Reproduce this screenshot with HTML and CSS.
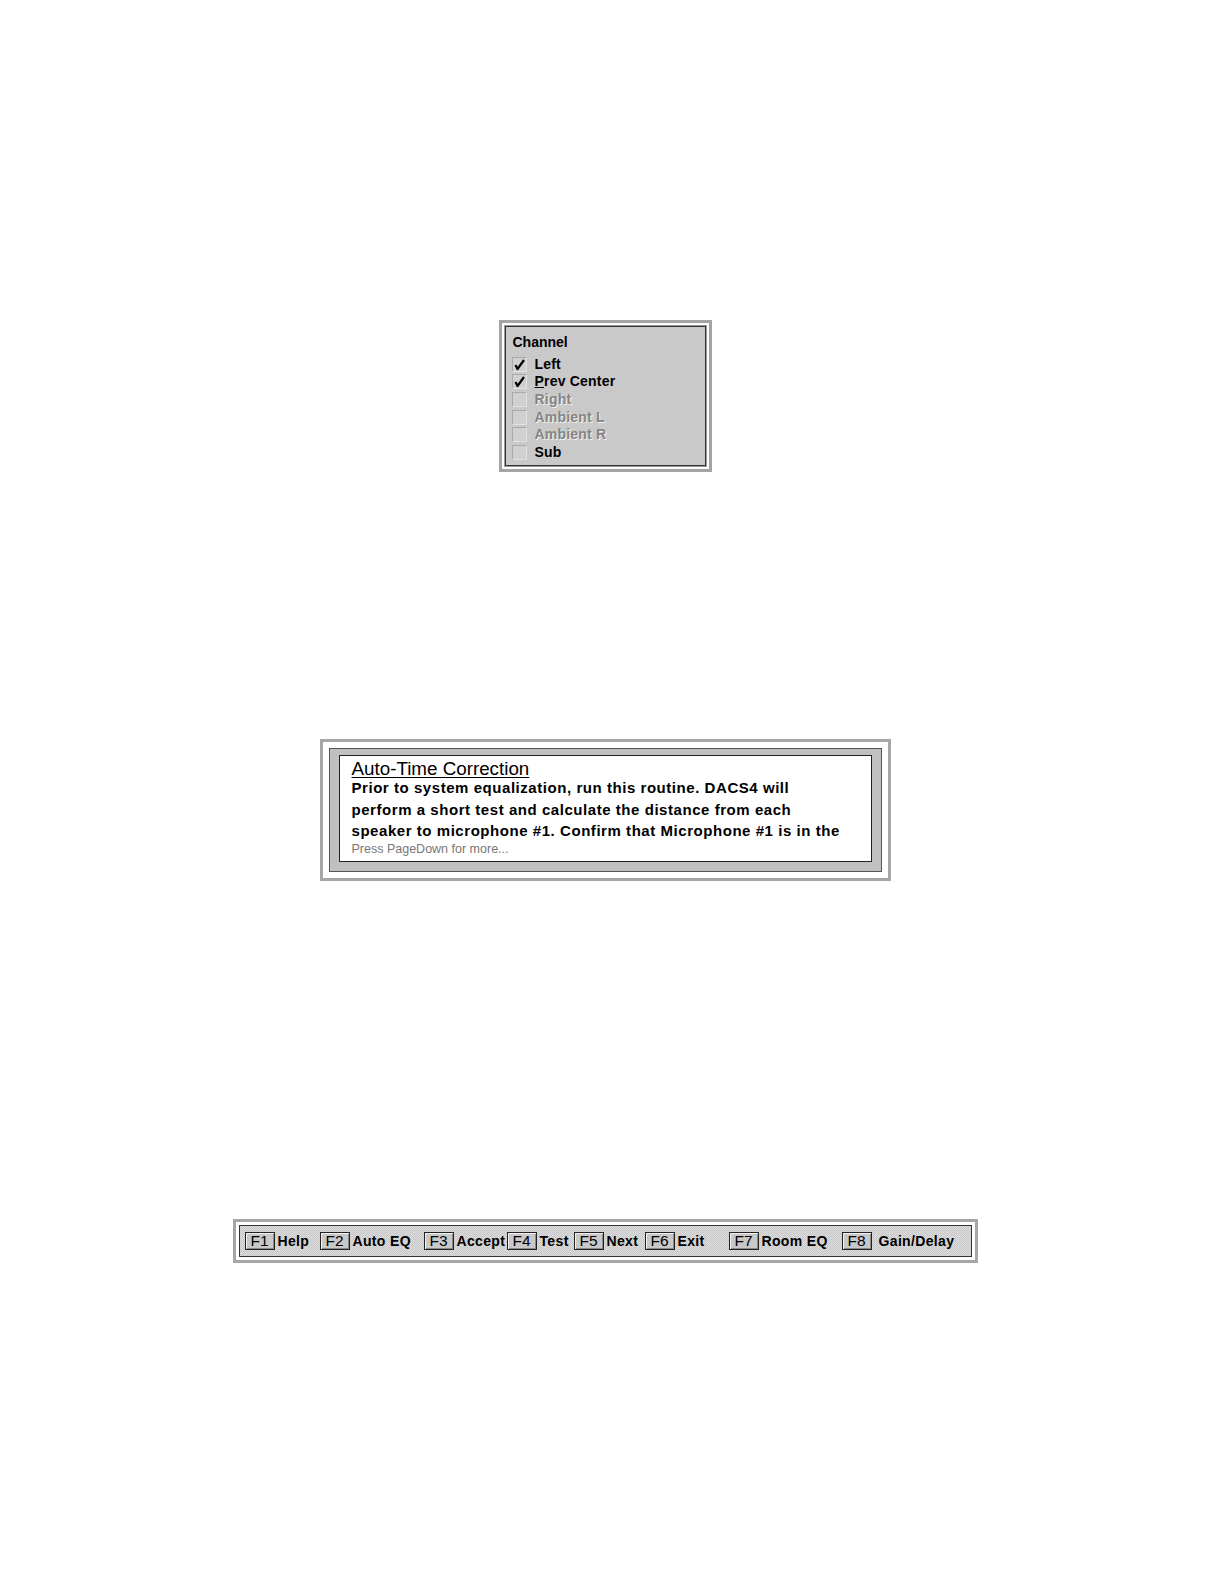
FILE: index.html
```html
<!DOCTYPE html>
<html>
<head>
<meta charset="utf-8">
<link rel="stylesheet" href="styles.css">
</head>
<body>
<div class="page">
  <div class="channel">
    <div class="channel-inner">
      <div class="channel-title">Channel</div>
      <div class="row"><span class="cb"><svg viewBox="0 0 15 15" width="15" height="15"><path d="M3.5 8 L5.5 12 L12 3" fill="none" stroke="#000" stroke-width="2.2" stroke-linejoin="round"/></svg></span><span class="lbl">Left</span></div>
      <div class="row"><span class="cb"><svg viewBox="0 0 15 15" width="15" height="15"><path d="M3.5 8 L5.5 12 L12 3" fill="none" stroke="#000" stroke-width="2.2" stroke-linejoin="round"/></svg></span><span class="lbl"><u>P</u>rev Center</span></div>
      <div class="row"><span class="cb"></span><span class="lbl off">Right</span></div>
      <div class="row"><span class="cb"></span><span class="lbl off">Ambient L</span></div>
      <div class="row"><span class="cb"></span><span class="lbl off">Ambient R</span></div>
      <div class="row"><span class="cb"></span><span class="lbl">Sub</span></div>
    </div>
  </div>

  <div class="info">
    <div class="info-mid">
      <div class="info-inner">
        <div class="info-title">Auto-Time Correction</div>
        <div class="info-body">Prior to system equalization, run this routine. DACS4 will<br>perform a short test and calculate the distance from each<br>speaker to microphone #1. Confirm that Microphone #1 is in the</div>
        <div class="info-more">Press PageDown for more...</div>
      </div>
    </div>
  </div>

  <div class="fkeys">
    <div class="fkeys-inner">
      <div class="fk"><span class="key">F1</span><span class="fl">Help</span></div>
      <div class="fk"><span class="key">F2</span><span class="fl">Auto EQ</span></div>
      <div class="fk"><span class="key">F3</span><span class="fl">Accept</span></div>
      <div class="fk"><span class="key">F4</span><span class="fl">Test</span></div>
      <div class="fk"><span class="key">F5</span><span class="fl">Next</span></div>
      <div class="fk"><span class="key">F6</span><span class="fl">Exit</span></div>
      <div class="fk"><span class="key">F7</span><span class="fl">Room EQ</span></div>
      <div class="fk"><span class="key">F8</span><span class="fl wide">Gain/Delay</span></div>
    </div>
  </div>
</div>
</body>
</html>
```

FILE: styles.css
```css
html, body {
  margin: 0;
  padding: 0;
  background: #fff;
}

body {
  font-family: "Liberation Sans", Arial, sans-serif;
  color: #000;
}

.page {
  width: 1210px;
  height: 1584px;
  display: flex;
  flex-direction: column;
  align-items: center;
  padding-top: 320px;
  box-sizing: border-box;
}

/* Channel box */
.channel {
  width: 213px;
  height: 152px;
  box-sizing: border-box;
  border: 3px solid #a4a4a4;
  padding: 3px;
  background: #fff;
}

.channel-inner {
  height: 100%;
  box-sizing: border-box;
  border: 1px solid #333;
  box-shadow: 0 0 0 1px #999;
  background: #c9c9c9;
  padding: 6px 6px 4px;
}

.channel-title {
  font-weight: bold;
  font-size: 14px;
  line-height: 18px;
  margin: 0 0 4.5px 1px;
}

.row {
  display: flex;
  align-items: center;
  height: 17.6px;
}

.cb {
  width: 15px;
  height: 15px;
  box-sizing: border-box;
  background: #d0d0d0;
  border: 1px solid;
  border-color: #aaa #e2e2e2 #e2e2e2 #aaa;
  margin-right: 8px;
  display: flex;
}

.cb svg {
  margin: -1px;
}

.lbl {
  font-weight: bold;
  font-size: 14px;
  line-height: 17px;
  letter-spacing: 0.2px;
}

.lbl.off {
  color: #858585;
  text-shadow: 1px 1px 0 #f2f2f2;
}

/* Info box */
.info {
  margin-top: 267px;
  width: 571px;
  height: 142px;
  box-sizing: border-box;
  border: 3px solid #a6a6a6;
  padding: 6px;
  background: #fff;
}

.info-mid {
  height: 100%;
  box-sizing: border-box;
  border: 1px solid #555;
  background: #c0c0c0;
  padding: 6px 9px 9px;
}

.info-inner {
  height: 100%;
  box-sizing: border-box;
  border: 1px solid #222;
  background: #fff;
  padding: 3px 12px 0;
}

.info-title {
  font-size: 18.8px;
  line-height: 20px;
  text-decoration: underline;
  text-decoration-thickness: 1px;
  text-underline-offset: 2px;
}

.info-body {
  margin-top: -2px;
  font-weight: bold;
  font-size: 15px;
  line-height: 21.5px;
  letter-spacing: 0.55px;
  white-space: nowrap;
}

.info-more {
  font-size: 12.5px;
  line-height: 14px;
  color: #777;
}

/* Function key bar */
.fkeys {
  margin-top: 338px;
  width: 745px;
  height: 44px;
  box-sizing: border-box;
  border: 3px solid #a6a6a6;
  padding: 3px;
  background: #fff;
}

.fkeys-inner {
  height: 100%;
  box-sizing: border-box;
  border: 1px solid #333;
  background-color: #d2d2d2;
  background-image: repeating-conic-gradient(#dcdcdc 0 25%, #c8c8c8 0 50%);
  background-size: 2px 2px;
  display: grid;
  grid-template-columns: 75px 104px 83px 67px 71px 84px 113px auto;
  align-items: center;
  padding-left: 5px;
}

.fk {
  display: flex;
  align-items: center;
}

.key {
  width: 30px;
  height: 18px;
  box-sizing: border-box;
  border: 1px solid #222;
  box-shadow: inset 1px 1px 0 #f0f0f0, inset -1px -1px 0 #8a8a8a;
  background: #c8c8c8;
  font-size: 15.5px;
  line-height: 16px;
  text-align: center;
}

.fl {
  font-weight: bold;
  font-size: 14px;
  letter-spacing: 0.35px;
  margin-left: 3px;
}

.fl.wide {
  margin-left: 7px;
}
```
